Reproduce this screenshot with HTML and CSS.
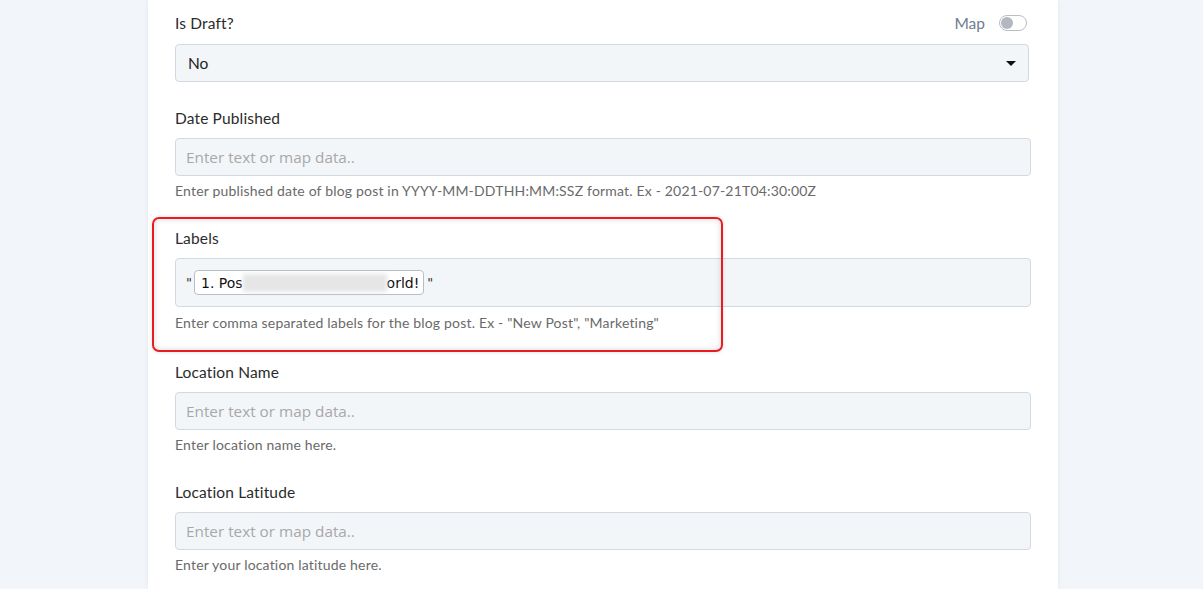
FILE: index.html
```html
<!DOCTYPE html>
<html lang="en">
<head>
  <meta charset="UTF-8" />
  <meta name="viewport" content="width=device-width, initial-scale=1.0" />
  <title>Blog Post Fields</title>
  <link rel="stylesheet" href="styles.css">
</head>
<body>
  <div class="form-card">
    <!-- Draft flag -->
    <div class="field field-select">
      <div class="field-head">
        <label for="is-draft">Is Draft?</label>
        <div class="map-switch">
          <span>Map</span>
          <span class="toggle"><span class="knob"></span></span>
        </div>
      </div>
      <div class="select-box" id="is-draft">
        <span>No</span>
        <span class="caret"></span>
      </div>
    </div>

    <div class="field">
      <label for="date-published">Date Published</label>
      <input type="text" id="date-published" placeholder="Enter text or map data.." />
      <div class="help">Enter published date of blog post in YYYY-MM-DDTHH:MM:SSZ format. Ex - 2021-07-21T04:30:00Z</div>
    </div>

    <div class="field field-marked">
      <label>Labels</label>
      <div class="tag-input">
        <span class="quote">"</span>
        <span class="tag">1. Pos<span class="masked"></span>orld!</span>
        <span class="quote">"</span>
      </div>
      <div class="help">Enter comma separated labels for the blog post. Ex - "New Post", "Marketing"</div>
      <div class="marker"></div>
    </div>

    <div class="field">
      <label for="location-name">Location Name</label>
      <input type="text" id="location-name" placeholder="Enter text or map data.." />
      <div class="help">Enter location name here.</div>
    </div>

    <div class="field">
      <label for="location-lat">Location Latitude</label>
      <input type="text" id="location-lat" placeholder="Enter text or map data.." />
      <div class="help">Enter your location latitude here.</div>
    </div>
  </div>
</body>
</html>
```

FILE: styles.css
```css
body {
  font-family: Lato, 'Open Sans', sans-serif;
  background-color: #f2f5f9;
  margin: 0;
  padding: 0;
  color: #2f2f2f;
  overflow: hidden;
}

.form-card {
  background-color: white;
  width: 910px;
  height: 100vh;
  margin-left: 148px;
  padding: 13px 27px 20px;
  box-sizing: border-box;
  box-shadow: 0 0 6px rgba(30, 50, 80, 0.06);
}

.field {
  margin-bottom: 27px;
}

.field-select {
  margin-bottom: 26px;
}

label {
  display: block;
  font-size: 15.5px;
  letter-spacing: 0.15px;
  line-height: 20px;
  margin-bottom: 10px;
  color: #2b2b2b;
}

.field-head {
  display: flex;
  justify-content: space-between;
  align-items: center;
  height: 20px;
  margin-bottom: 11px;
}

.field-head label {
  margin-bottom: 0;
}

.map-switch {
  display: flex;
  align-items: center;
  gap: 14px;
  font-size: 15.5px;
  color: #6e7b8f;
  margin-right: 4px;
}

.toggle {
  width: 26px;
  height: 14px;
  border: 1px solid #b9bec6;
  border-radius: 8px;
  position: relative;
}

.knob {
  position: absolute;
  left: 1px;
  top: 1px;
  width: 12px;
  height: 12px;
  border-radius: 50%;
  background-color: #b3b8c0;
}

.select-box,
input,
.tag-input {
  width: 100%;
  box-sizing: border-box;
  background-color: #f3f6f9;
  border: 1px solid #d3d9e1;
  border-radius: 4px;
}

.select-box {
  width: calc(100% - 2px);
  height: 38px;
  display: flex;
  align-items: center;
  justify-content: space-between;
  padding: 0 12px;
  font-size: 15.5px;
  color: #222;
}

.caret {
  width: 0;
  height: 0;
  border-left: 5px solid transparent;
  border-right: 5px solid transparent;
  border-top: 5px solid #111;
}

input {
  display: block;
  height: 38px;
  padding: 0 10px;
  font-family: 'Open Sans', sans-serif;
  font-size: 15.3px;
  color: #333;
  outline: none;
}

input::placeholder {
  color: #a8a8a8;
}

.help {
  font-size: 14px;
  letter-spacing: 0.18px;
  line-height: 20px;
  margin: 5px 0 2px;
  color: #6a6a6a;
}

.tag-input {
  height: 49px;
  margin-top: 1px;
  display: flex;
  align-items: center;
  padding: 0 10px;
  font-family: 'DejaVu Sans', sans-serif;
  font-size: 14px;
  color: #333;
}

.field-marked {
  position: relative;
  margin-bottom: 29px;
}

.field-marked .help {
  margin-top: 6px;
}

.quote {
  font-size: 13px;
}

.tag {
  display: inline-flex;
  align-items: center;
  height: 25px;
  margin: 0 3px 0 2px;
  padding: 0 4px 0 6px;
  background-color: white;
  border: 1px solid #b9bec6;
  border-radius: 4px;
  box-sizing: border-box;
  font-size: 14px;
  color: #111;
}

/* blurred-out part of the label value */
.masked {
  display: inline-block;
  width: 144px;
  height: 18px;
  background-color: #e6e6e6;
  filter: blur(2px);
}

.marker {
  position: absolute;
  left: -23px;
  top: -11px;
  width: 571px;
  height: 135px;
  border: 2px solid #ea1c22;
  border-radius: 7px;
  box-sizing: border-box;
  box-shadow: inset 0 0 6px rgba(0, 0, 0, 0.15), 0 0 4px rgba(0, 0, 0, 0.12);
  pointer-events: none;
}
```
